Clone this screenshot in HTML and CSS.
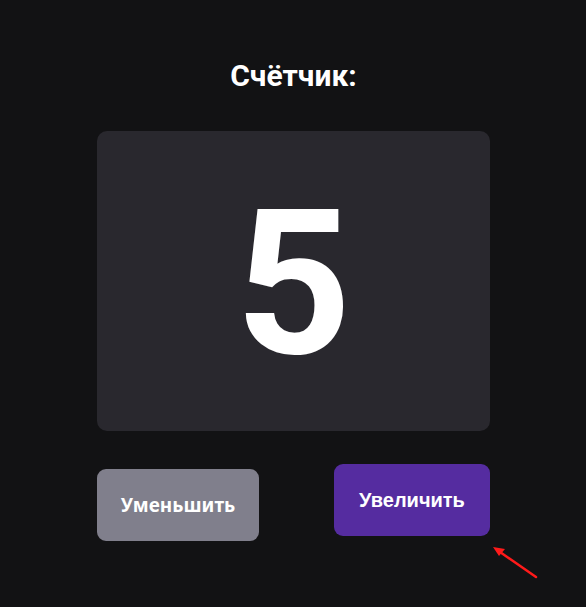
FILE: index.html
```html
<!DOCTYPE html>
<html lang="ru">
<head>
<meta charset="utf-8">
<link rel="stylesheet" href="styles.css">
</head>
<body>
<main class="app">
  <h1 class="title">Счётчик:</h1>
  <div class="display"><span class="value">5</span></div>
  <div class="controls">
    <button class="btn btn-dec">Уменьшить</button>
    <div class="inc-wrap">
      <button class="btn btn-inc">Увеличить</button>
      <svg class="arrow" width="60" height="50" viewBox="0 0 60 50">
        <line x1="48" y1="39" x2="12" y2="14" stroke="#ff1a1a" stroke-width="2.5" stroke-linecap="round"/>
        <polygon points="5,9 17,11 11,18" fill="#ff1a1a"/>
      </svg>
    </div>
  </div>
</main>
</body>
</html>
```
FILE: styles.css
```css
html, body {
  margin: 0;
  padding: 0;
  background: #121214;
  height: 100%;
}
.app {
  width: 393px;
  margin-left: 97px;
  padding-top: 55px;
  font-family: Roboto, "Liberation Sans", sans-serif;
  color: #fff;
}
.title {
  margin: 0;
  text-align: center;
  font-size: 30px;
  font-weight: 700;
  line-height: 42px;
}
.display {
  margin-top: 34px;
  height: 300px;
  background: #29282e;
  border-radius: 10px;
  display: flex;
  align-items: center;
  justify-content: center;
}
.value {
  font-size: 202px;
  font-weight: 700;
  line-height: 1;
  color: #fff;
  position: relative;
  top: 3px;
}
.controls {
  margin-top: 33px;
  display: flex;
  justify-content: space-between;
  align-items: flex-start;
}
.btn {
  border: none;
  border-radius: 9px;
  height: 72px;
  color: #fff;
  font-weight: 700;
  font-size: 19px;
  padding: 0;
}
.btn-dec {
  margin-top: 5px;
  width: 162px;
  background: #807f8c;
  font-family: "Noto Sans", "Open Sans", sans-serif;
}
.inc-wrap {
  position: relative;
}
.btn-inc {
  width: 156px;
  background: #552ca0;
  font-family: "Liberation Sans", Arial, sans-serif;
  font-size: 20px;
}
.arrow {
  position: absolute;
  left: 154px;
  top: 74px;
}
```
